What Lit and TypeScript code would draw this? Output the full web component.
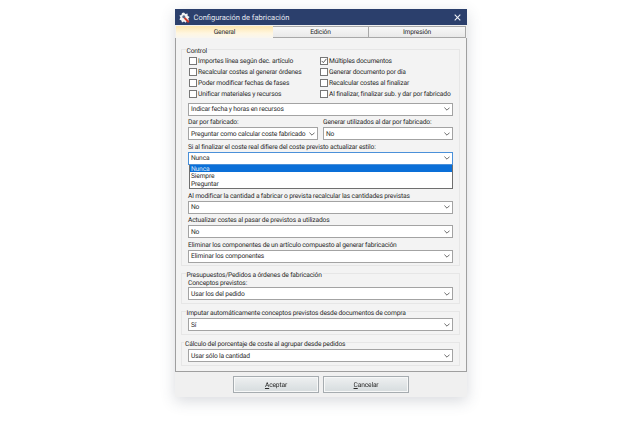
import { LitElement, html, css, svg } from "lit";
import { customElement } from "lit/decorators.js";

const chevron = html`<svg class="chev" width="6" height="4" viewBox="0 0 6 4"><path d="M.4.6 3 3.2 5.6.6" fill="none" stroke="#6a6a6a" stroke-width="1"/></svg>`;

const logo = svg`<path d="M5 0.5 6.4 2 8.6 1.6 8.6 3.8 10.6 5 9.2 6.6 10 8.6 7.8 9 6.8 10.8 5 9.6 3 10.6 2.4 8.4 .4 7.6 1.4 5.6 .4 3.6 2.4 3 3 .9Z" fill="#f4f4f4"/><path d="M6 5 10.5 9.5 9 11 4.8 6.4Z" fill="#d0392b"/><circle cx="4.8" cy="4.8" r="1.5" fill="#5b6a86"/>`;

@customElement("app-root")
export class AppRoot extends LitElement {
  static styles = css`
    :host {
      display: block;
      width: 640px;
      height: 425px;
      background: #fff;
      box-sizing: border-box;
      padding: 9px 0 0 175px;
      font-family: Roboto, "Liberation Sans", Arial, sans-serif;
      font-size: 6.7px;
      letter-spacing: -0.17px;
      color: #2a2a2a;
      overflow: hidden;
      text-rendering: geometricPrecision;
    }
    .win {
      width: 292px;
      height: 388px;
      background: #f0f0f0;
      box-shadow: 0 4px 14px rgba(60, 70, 90, 0.2);
      display: flex;
      flex-direction: column;
      filter: blur(0.3px);
    }
    .title {
      height: 16px;
      flex: none;
      background: #2b3f6c;
      color: #e4e8f0;
      display: flex;
      align-items: center;
      font-size: 7.5px;
      letter-spacing: 0;
      padding: 0 6px 0 4px;
      gap: 3.5px;
    }
    .title span { flex: 1; }
    .title .logo { flex: none; }
    .tabs {
      display: grid;
      grid-template-columns: 97px 96px 97px;
      margin: 1px 1px 0;
      height: 12px;
      flex: none;
    }
    .tab {
      display: flex;
      align-items: center;
      justify-content: center;
      background: linear-gradient(#f7f7f7, #e9e9e9);
      border: 1px solid #a8a8a8;
      border-left: 0;
      box-sizing: border-box;
    }
    .tab.on {
      background: linear-gradient(#fde6ae, #fff6e0 60%, #f8f6f0);
      border: 0;
    }
    .panel {
      flex: 1;
      border: 1px solid #9f9f9f;
      border-top: 0;
      background: #f3f3f3;
      box-sizing: border-box;
      padding: 6px 6px 5px 5px;
      display: flex;
      flex-direction: column;
    }
    fieldset {
      margin: 0;
      padding: 0 6px 3px 6px;
      border: 1px solid #e6e6e6;
      min-width: 0;
      display: block;
    }
    fieldset + fieldset { margin-top: 2px; }
    fieldset.main { padding-bottom: 2.5px; }
    legend {
      padding: 0 1px;
      margin-left: -2.5px;
      line-height: 14px;
      height: 11px;
      white-space: nowrap;
    }
    legend.far { margin-left: -4px; }
    .checks {
      display: grid;
      grid-template-columns: 131px 1fr;
      grid-auto-rows: 11px;
      padding: 0.5px 0 0 1px;
    }
    .check {
      display: flex;
      align-items: center;
      gap: 1px;
      white-space: nowrap;
    }
    .box {
      width: 6px;
      height: 6px;
      border: 1px solid #777;
      background: #fff;
      flex: none;
      display: block;
    }
    .box svg { display: block; }
    .field { margin-top: 0.5px; position: relative; min-width: 0; }
    .field.gapped { margin-top: 25px; }
    .field.tight { margin-top: -3px; }
    .field.tight .lab { line-height: 15px; }
    .lab {
      height: 11px;
      line-height: 13px;
      white-space: nowrap;
    }
    .sel {
      height: 13px;
      box-sizing: border-box;
      border: 1px solid #a3a3a3;
      background: #fff;
      display: flex;
      align-items: center;
      justify-content: space-between;
      padding: 0 2px 0 2px;
      white-space: nowrap;
    }
    .sel.focus { border-color: #4a90d9; }
    .chev { flex: none; }
    .first { margin-top: 3px; }
    .near { margin-top: 1px; }
    .two {
      display: grid;
      grid-template-columns: 130px 130px;
      gap: 5px;
    }
    .drop {
      position: absolute;
      left: 1px;
      right: 0;
      top: 24px;
      height: 24px;
      box-sizing: border-box;
      border: 1px solid #6f6f6f;
      border-top: 0;
      background: #fff;
      z-index: 2;
    }
    .opt { height: 7.5px; line-height: 8.5px; padding-left: 1px; }
    .opt.hi { background: #0a6fd8; color: #dfe9f7; }
    .foot {
      height: 24px;
      flex: none;
      display: flex;
      justify-content: center;
      align-items: flex-start;
      gap: 4px;
      padding: 4px 0 0 0;
    }
    .btn {
      width: 86px;
      height: 17px;
      box-sizing: border-box;
      border: 1px solid #a6acb0;
      background: linear-gradient(#eef0f1, #d6dcde);
      display: flex;
      align-items: center;
      justify-content: center;
      box-shadow: inset 0 0 0 1px #f7f8f8;
    }
    u { text-decoration-thickness: 1px; text-underline-offset: 1px; }
  `;

  private check(label: string, on = false) {
    return html`<div class="check"><span class="box">${on
        ? html`<svg width="6" height="6" viewBox="0 0 7 7"><path d="M.8 3.4 2.7 5.4 6.3 1" fill="none" stroke="#444" stroke-width="1"/></svg>`
        : ""}</span><span>${label}</span></div>`;
  }

  private sel(value: string, cls = "") {
    return html`<div class="sel ${cls}"><span>${value}</span>${chevron}</div>`;
  }

  private field(label: string, value: string, cls = "") {
    return html`<div class="field ${cls}"><div class="lab">${label}</div>${this.sel(value)}</div>`;
  }

  render() {
    return html`<div class="win">
      <div class="title">
        <svg class="logo" width="11" height="11" viewBox="0 0 11 11">${logo}</svg>
        <span>Configuración de fabricación</span>
        <svg width="7" height="7" viewBox="0 0 8 8"><path d="M.8.8 7.2 7.2M7.2.8.8 7.2" stroke="#f2f4f8" stroke-width="1.2"/></svg>
      </div>
      <div class="tabs">
        <div class="tab on">General</div>
        <div class="tab">Edición</div>
        <div class="tab">Impresión</div>
      </div>
      <div class="panel">
        <fieldset class="main">
          <legend>Control</legend>
          <div class="checks">
            ${this.check("Importes línea según dec. artículo")}
            ${this.check("Múltiples documentos", true)}
            ${this.check("Recalcular costes al generar órdenes")}
            ${this.check("Generar documento por día")}
            ${this.check("Poder modificar fechas de fases")}
            ${this.check("Recalcular costes al finalizar")}
            ${this.check("Unificar materiales y recursos")}
            ${this.check("Al finalizar, finalizar sub. y dar por fabricado")}
          </div>
          <div class="first">${this.sel("Indicar fecha y horas en recursos")}</div>
          <div class="two">
            ${this.field("Dar por fabricado:", "Preguntar como calcular coste fabricado")}
            ${this.field("Generar utilizados al dar por fabricado:", "No")}
          </div>
          <div class="field">
            <div class="lab">Si al finalizar el coste real difiere del coste previsto actualizar estilo:</div>
            ${this.sel("Nunca", "focus")}
            <div class="drop">
              <div class="opt hi">Nunca</div>
              <div class="opt">Siempre</div>
              <div class="opt">Preguntar</div>
            </div>
          </div>
          ${this.field("Al modificar la cantidad a fabricar o prevista recalcular las cantidades previstas", "No", "gapped")}
          ${this.field("Actualizar costes al pasar de previstos a utilizados", "No")}
          ${this.field("Eliminar los componentes de un artículo compuesto al generar fabricación", "Eliminar los componentes")}
        </fieldset>
        <fieldset>
          <legend>Presupuestos/Pedidos a órdenes de fabricación</legend>
          ${this.field("Conceptos previstos:", "Usar los del pedido", "tight")}
        </fieldset>
        <fieldset>
          <legend>Imputar automáticamente conceptos previstos desde documentos de compra</legend>
          <div class="near">${this.sel("Sí")}</div>
        </fieldset>
        <fieldset>
          <legend class="far">Cálculo del porcentaje de coste al agrupar desde pedidos</legend>
          <div class="near">${this.sel("Usar sólo la cantidad")}</div>
        </fieldset>
      </div>
      <div class="foot">
        <div class="btn"><span><u>A</u>ceptar</span></div>
        <div class="btn"><span><u>C</u>ancelar</span></div>
      </div>
    </div>`;
  }
}
